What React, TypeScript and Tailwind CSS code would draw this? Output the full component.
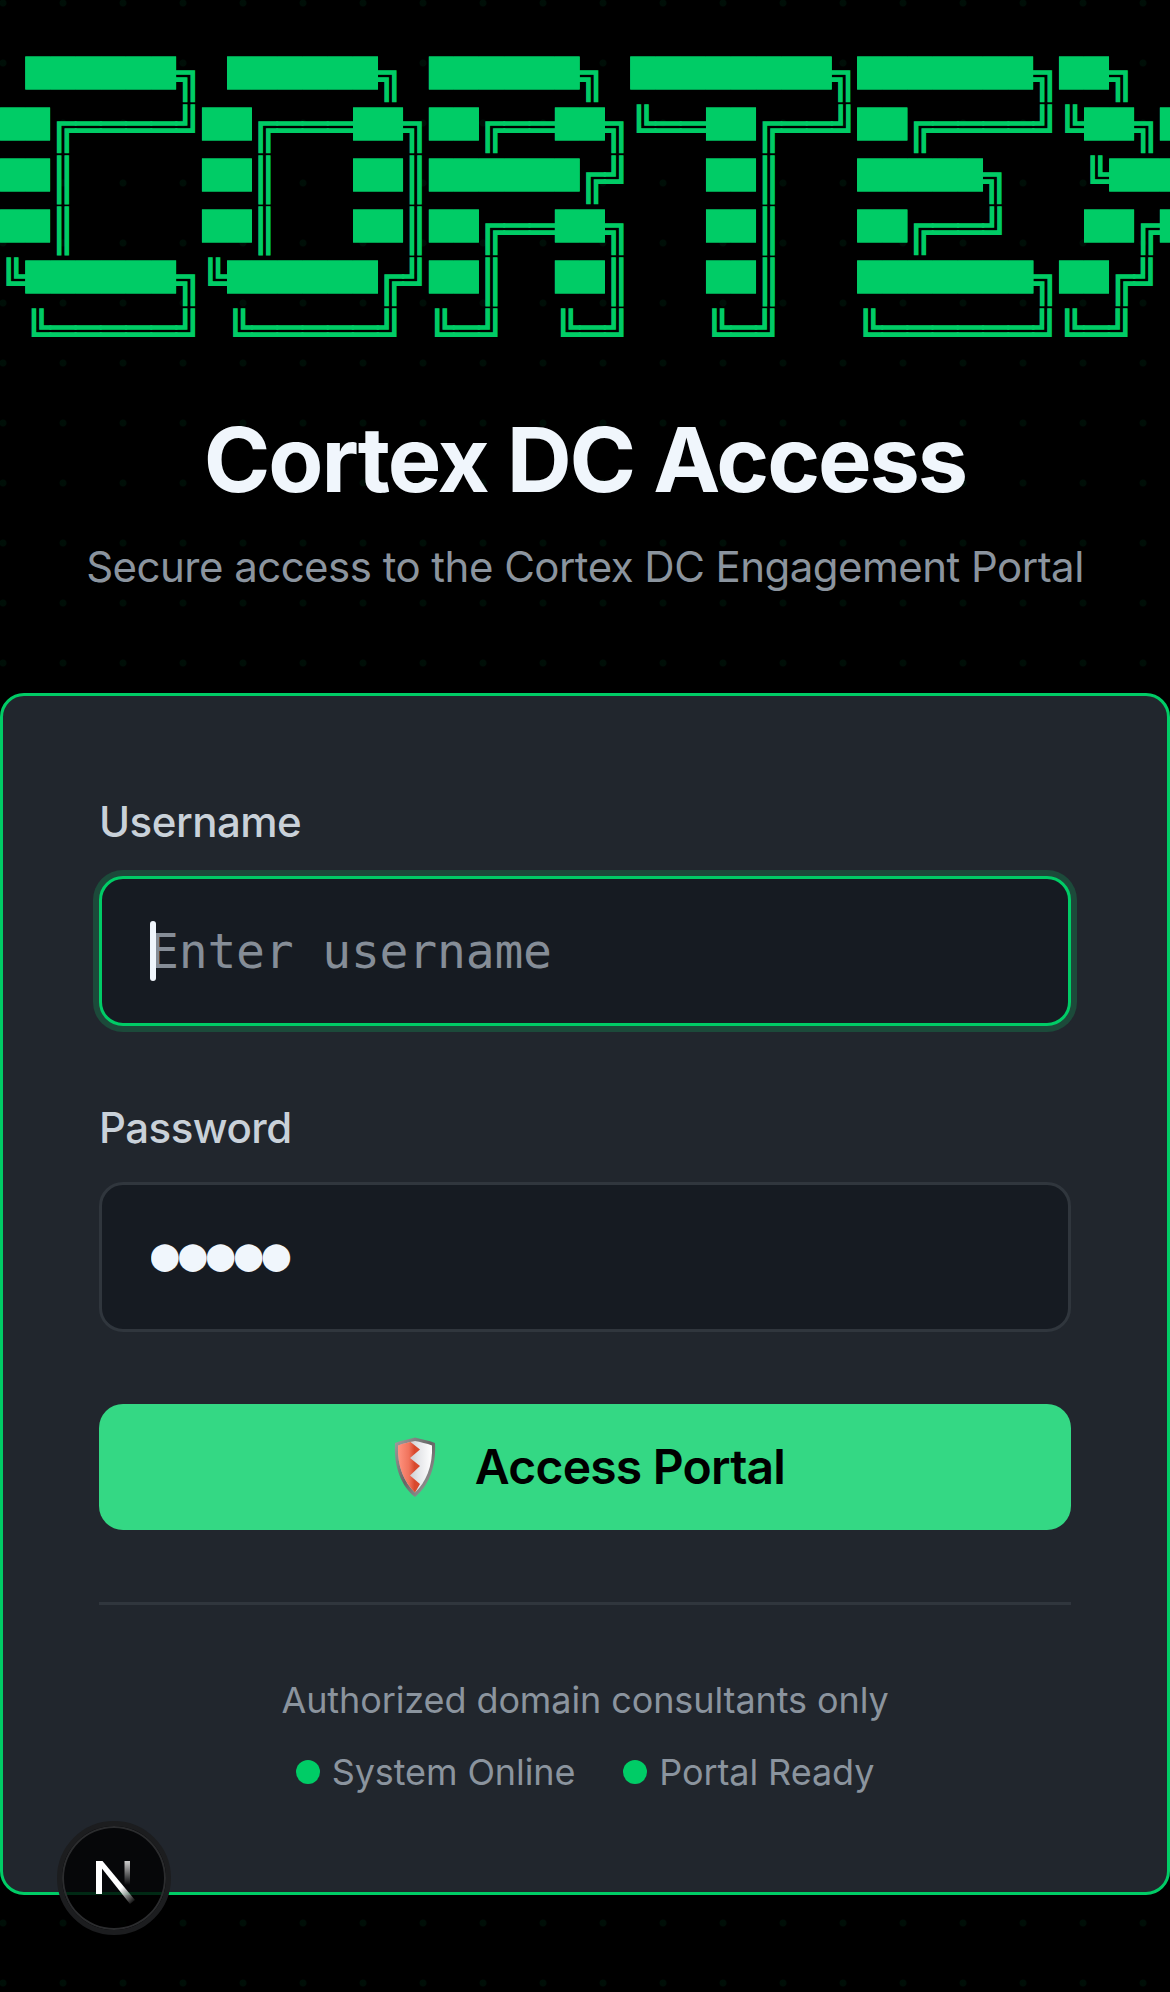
const ART = [
  " ██████╗ ██████╗ ██████╗ ████████╗███████╗██╗  ██╗",
  "██╔════╝██╔═══██╗██╔══██╗╚══██╔══╝██╔════╝╚██╗██╔╝",
  "██║     ██║   ██║██████╔╝   ██║   █████╗   ╚███╔╝ ",
  "██║     ██║   ██║██╔══██╗   ██║   ██╔══╝   ██╔██╗ ",
  "╚██████╗╚██████╔╝██║  ██║   ██║   ███████╗██╔╝ ██╗",
  " ╚═════╝ ╚═════╝ ╚═╝  ╚═╝   ╚═╝   ╚══════╝╚═╝  ╚═╝",
];

function Banner() {
  return (
    <pre className="font-['Liberation_Mono',monospace] text-[42px] leading-[51px] text-[#00cc66] whitespace-pre">
      {ART.map((line, i) => (
        <div key={i} className="h-[51px]">
          {line.split(/(█+)/).map((part, j) =>
            part.startsWith("█") ? (
              <span key={j} className="bg-[#00cc66] [clip-path:inset(2.6px_0_12.5px_0)]">
                {part}
              </span>
            ) : (
              <span key={j} className="[-webkit-text-stroke:1.6px_#00cc66]">{part}</span>
            ),
          )}
        </div>
      ))}
    </pre>
  );
}

function Shield() {
  return (
    <svg viewBox="0 0 60 60" className="w-[60px] h-[60px] shrink-0">
      <defs>
        <linearGradient id="sr" x1="0" x2="1" y1="0" y2="0">
          <stop offset="0" stopColor="#ff9480" />
          <stop offset="0.5" stopColor="#f0735c" />
          <stop offset="0.75" stopColor="#d9492d" />
          <stop offset="1" stopColor="#d9492d" />
        </linearGradient>
        <linearGradient id="sw" x1="0" x2="1" y1="0" y2="0">
          <stop offset="0" stopColor="#a9abb0" />
          <stop offset="0.6" stopColor="#e4e5e8" />
          <stop offset="1" stopColor="#ffffff" />
        </linearGradient>
        <linearGradient id="sb" x1="0" x2="1" y1="0" y2="1">
          <stop offset="0" stopColor="#a0a0a0" />
          <stop offset="0.5" stopColor="#666666" />
          <stop offset="1" stopColor="#a8a8a8" />
        </linearGradient>
      </defs>
      <path d="M30 0.5C24 2 16 3.5 10 6C8.5 30 17 50 30 60C43 50 51.5 30 50 6C44 3.5 36 2 30 0.5Z" fill="url(#sb)" />
      <path d="M30 4C25 5 18 6.5 13 8.5C12 29 19.5 46 30 55.5C40.5 46 48 29 47 8.5C42 6.5 35 5 30 4Z" fill="url(#sw)" />
      <path d="M30 4C25 5 18 6.5 13 8.5C12 29 19.5 46 30 55.5L35 47L25 38.5L35 29L25 21L35 12.5L25.5 5Z" fill="url(#sr)" />
    </svg>
  );
}

function NextBadge() {
  return (
    <div className="absolute left-[57px] top-[1821px] w-[114px] h-[114px] rounded-full border-[5px] border-[#1c1d1f] shadow-[inset_0_0_0_2px_#2b2c2e] bg-[#000000cc] flex items-center justify-center">
      <svg viewBox="0 0 60 60" className="w-[60px] h-[60px]">
        <defs>
          <linearGradient id="nd" x1="12" x2="50" y1="13" y2="55" gradientUnits="userSpaceOnUse">
            <stop offset="0.65" stopColor="#ffffff" />
            <stop offset="1" stopColor="#ffffff" stopOpacity="0" />
          </linearGradient>
          <linearGradient id="ns" x1="0" x2="0" y1="0" y2="1">
            <stop offset="0" stopColor="#ffffff" stopOpacity="0.8" />
            <stop offset="1" stopColor="#ffffff" stopOpacity="0" />
          </linearGradient>
        </defs>
        <path d="M12 13H18V46H12Z" fill="#ffffff" />
        <path d="M12 13H18.5L51 52L46 56Z" fill="url(#nd)" />
        <path d="M40.5 13H46V37H40.5Z" fill="url(#ns)" />
      </svg>
    </div>
  );
}

function Field({ label, type, placeholder, value, focused }: { label: string; type: string; placeholder?: string; value?: string; focused?: boolean }) {
  return (
    <div className="mb-[72px]">
      <label className="block mb-[24px] text-[42px] leading-[60px] font-medium tracking-[-0.5px] text-[#c9d1d9]">{label}</label>
      <div className="relative">
        <input
          type={type}
          placeholder={placeholder}
          defaultValue={value}
          readOnly
          className={
            focused
              ? "block w-full h-[150px] px-[48px] rounded-[24px] border-[3px] border-[#00cc66] bg-[#161b22] text-[48px] tracking-[-0.2px] text-[#f0f6fc] font-['DejaVu_Sans_Mono',monospace] placeholder:text-[#858d97] shadow-[0_0_0_6px_#1c4a3a] outline-none"
              : "block w-full h-[150px] pl-[49px] pr-[48px] pb-[7px] rounded-[24px] border-[3px] border-[#30363d] bg-[#161b22] text-[46px] tracking-[0.2px] text-[#f0f6fc] font-['DejaVu_Sans_Mono',monospace] outline-none"
          }
        />
        {focused && <span className="absolute left-[51px] top-[45px] w-[6px] h-[60px] rounded-full bg-[#f0f6fc]" />}
      </div>
    </div>
  );
}

function Status({ label }: { label: string }) {
  return (
    <div className="flex items-center gap-[12px]">
      <span className="w-[24px] h-[24px] rounded-full bg-[#00cc66]" />
      <span>{label}</span>
    </div>
  );
}

export default function App() {
  return (
    <div className="relative min-h-[1992px] overflow-hidden bg-black bg-[radial-gradient(circle,#00cc6612_3px,transparent_4px)] bg-[size:60px_60px] bg-[position:-27px_-27px] font-['Inter',sans-serif]">
      <header className="pt-[53px] text-center">
        <div className="text-left">
          <Banner />
        </div>
        <h1 className="mt-[47px] text-[90px] leading-[108px] font-bold tracking-[-2.1px] text-[#f0f6fc]">Cortex DC Access</h1>
        <p className="mt-[23px] text-[42px] leading-[60px] tracking-[-0.53px] text-[#8b949e]">Secure access to the Cortex DC Engagement Portal</p>
      </header>

      <main className="mt-[96px] border-[3px] border-[#00cc66] rounded-[24px] bg-[#21262d] p-[96px]">
        <Field label="Username" type="text" placeholder="Enter username" focused />
        <Field label="Password" type="text" value="●●●●●" />
        <button className="flex items-center justify-center gap-[30px] w-full h-[126px] rounded-[24px] bg-[#34d884] text-[48px] font-semibold tracking-[-0.78px] text-black">
          <Shield />
          <span>Access Portal</span>
        </button>
        <div className="mt-[72px] pt-[71px] border-t-[3px] border-[#30363d] text-center text-[36px] leading-[48px] tracking-[-0.1px] text-[#8b949e]">
          <p>Authorized domain consultants only</p>
          <div className="mt-[24px] flex justify-center gap-[48px]">
            <Status label="System Online" />
            <Status label="Portal Ready" />
          </div>
        </div>
      </main>
      <NextBadge />
    </div>
  );
}
